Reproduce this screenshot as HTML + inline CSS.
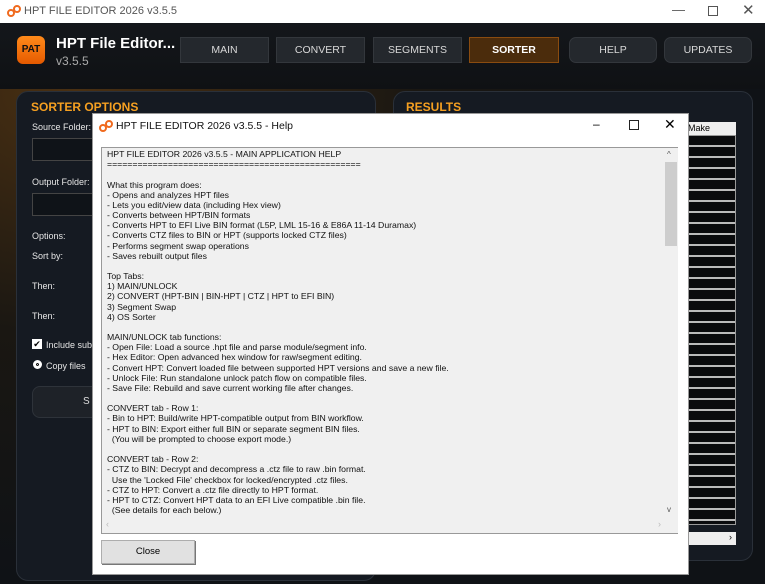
<!DOCTYPE html>
<html><head><meta charset="utf-8"><style>
*{margin:0;padding:0;box-sizing:border-box}
body{width:765px;height:584px;overflow:hidden;background:#0b0d10;font-family:"Liberation Sans",sans-serif;position:relative}
.abs{position:absolute}
.tb{left:0;top:0;width:765px;height:23px;background:#fff;color:#555;font-size:11px}
.hdr{left:0;top:23px;width:765px;height:66px;background:linear-gradient(#14171b,#0f1114)}
.tab{position:absolute;top:37px;height:26px;background:#24282d;border:1px solid #33373c;color:#d8d8d8;font-size:10.5px;text-align:center;line-height:24px}
.body{left:0;top:89px;width:765px;height:495px;background:radial-gradient(ellipse at 10% 0%,#4a3012 0%,#1a1712 35%,#0f1216 70%)}
.panel{background:#151a22;border:1px solid #2a3039;border-radius:12px}
.lbl{color:#e6e6e6;font-size:9px}
.dlg{left:92px;top:113px;width:597px;height:462px;background:#fff;border:1px solid #999}
pre{font-family:"Liberation Sans",sans-serif;font-size:8.7px;line-height:10.17px;color:#111}
</style></head><body>
<div class="abs tb"><svg class="abs" style="left:7px;top:5px" width="14" height="12"><circle cx="4" cy="8" r="3" fill="none" stroke="#f06a1e" stroke-width="2"/><circle cx="10" cy="4" r="3" fill="none" stroke="#f06a1e" stroke-width="2"/></svg><span class="abs" style="left:24px;top:5px">HPT FILE EDITOR 2026 v3.5.5</span>
<span class="abs" style="left:672px;top:2px;font-size:13px">—</span><span class="abs" style="left:708px;top:6px;width:10px;height:10px;border:1px solid #555"></span><span class="abs" style="left:742px;top:1px;font-size:15px">✕</span></div>
<div class="abs hdr"></div>
<div class="abs" style="left:17px;top:36px;width:28px;height:28px;border-radius:6px;background:linear-gradient(#ff8a1a,#e55a00);color:#111;font-weight:bold;font-size:10px;text-align:center;line-height:28px">PAT</div>
<div class="abs" style="left:56px;top:35px;color:#fff;font-weight:bold;font-size:15px">HPT File Editor...</div>
<div class="abs" style="left:56px;top:54px;color:#aaa;font-size:12px">v3.5.5</div>
<div class="tab" style="left:180px;width:89px">MAIN</div>
<div class="tab" style="left:276px;width:89px">CONVERT</div>
<div class="tab" style="left:373px;width:89px">SEGMENTS</div>
<div class="tab" style="left:469px;width:90px;background:#4b2c0c;border-color:#8a4c10;color:#fff;font-weight:bold">SORTER</div>
<div class="tab" style="left:569px;width:88px;border-radius:7px">HELP</div>
<div class="tab" style="left:664px;width:88px;border-radius:7px">UPDATES</div>
<div class="abs body"></div>
<div class="abs panel" style="left:16px;top:91px;width:360px;height:490px"></div>
<div class="abs" style="left:31px;top:100px;color:#f6a021;font-weight:bold;font-size:12px">SORTER OPTIONS</div>
<div class="abs lbl" style="left:32px;top:122px">Source Folder:</div>
<div class="abs" style="left:32px;top:138px;width:70px;height:23px;border:1px solid #444;background:#0f1318"></div>
<div class="abs lbl" style="left:32px;top:177px">Output Folder:</div>
<div class="abs" style="left:32px;top:193px;width:70px;height:23px;border:1px solid #444;background:#0f1318"></div>
<div class="abs lbl" style="left:32px;top:231px">Options:</div>
<div class="abs lbl" style="left:32px;top:251px">Sort by:</div>
<div class="abs lbl" style="left:32px;top:281px">Then:</div>
<div class="abs lbl" style="left:32px;top:311px">Then:</div>
<div class="abs" style="left:32px;top:339px;width:10px;height:10px;background:#fff;color:#000;font-size:9px;line-height:10px;text-align:center">✔</div>
<div class="abs lbl" style="left:46px;top:340px">Include sub</div>
<div class="abs" style="left:33px;top:360px;width:9px;height:9px;border-radius:50%;background:#fff;border:3px solid #fff;box-shadow:inset 0 0 0 1px #000"></div>
<div class="abs lbl" style="left:46px;top:361px">Copy files</div>
<div class="abs" style="left:32px;top:386px;width:70px;height:32px;border-radius:8px;background:#1e2228;border:1px solid #2e333a;color:#ddd;font-size:10px;line-height:30px;padding-left:50px">S</div>
<div class="abs panel" style="left:393px;top:91px;width:360px;height:470px"></div>
<div class="abs" style="left:406px;top:100px;color:#f6a021;font-weight:bold;font-size:12px">RESULTS</div>
<div class="abs" style="left:687px;top:122px;width:49px;height:13px;background:#eee;font-size:9px;line-height:13px;padding-left:1px">Make</div>
<div class="abs" style="left:687px;top:135px;width:49px;height:390px;background:repeating-linear-gradient(#0a0b0d 0 9px,#bbb 9px 11px);border:1px solid #999"></div>
<div class="abs" style="left:687px;top:532px;width:49px;height:13px;background:#eee;font-size:9px;text-align:right;padding-right:4px">›</div>
<div class="abs dlg">
<svg class="abs" style="left:6px;top:6px" width="14" height="12"><circle cx="4" cy="8" r="3" fill="none" stroke="#f06a1e" stroke-width="2"/><circle cx="10" cy="4" r="3" fill="none" stroke="#f06a1e" stroke-width="2"/></svg>
<div class="abs" style="left:23px;top:6px;font-size:10.5px;color:#111">HPT FILE EDITOR 2026 v3.5.5 - Help</div>
<div class="abs" style="left:500px;top:3px;font-size:12px">–</div>
<div class="abs" style="left:536px;top:6px;width:10px;height:10px;border:1px solid #222"></div>
<div class="abs" style="left:571px;top:2px;font-size:14px">✕</div>
<div class="abs" style="left:8px;top:33px;width:577px;height:387px;background:#f0f0f0;border:1px solid #999;border-right:none;overflow:hidden">
<pre style="position:absolute;left:5px;top:1px">HPT FILE EDITOR 2026 v3.5.5 - MAIN APPLICATION HELP
==================================================

What this program does:
- Opens and analyzes HPT files
- Lets you edit/view data (including Hex view)
- Converts between HPT/BIN formats
- Converts HPT to EFI Live BIN format (L5P, LML 15-16 &amp; E86A 11-14 Duramax)
- Converts CTZ files to BIN or HPT (supports locked CTZ files)
- Performs segment swap operations
- Saves rebuilt output files

Top Tabs:
1) MAIN/UNLOCK
2) CONVERT (HPT-BIN | BIN-HPT | CTZ | HPT to EFI BIN)
3) Segment Swap
4) OS Sorter

MAIN/UNLOCK tab functions:
- Open File: Load a source .hpt file and parse module/segment info.
- Hex Editor: Open advanced hex window for raw/segment editing.
- Convert HPT: Convert loaded file between supported HPT versions and save a new file.
- Unlock File: Run standalone unlock patch flow on compatible files.
- Save File: Rebuild and save current working file after changes.

CONVERT tab - Row 1:
- Bin to HPT: Build/write HPT-compatible output from BIN workflow.
- HPT to BIN: Export either full BIN or separate segment BIN files.
  (You will be prompted to choose export mode.)

CONVERT tab - Row 2:
- CTZ to BIN: Decrypt and decompress a .ctz file to raw .bin format.
  Use the 'Locked File' checkbox for locked/encrypted .ctz files.
- CTZ to HPT: Convert a .ctz file directly to HPT format.
- HPT to CTZ: Convert HPT data to an EFI Live compatible .bin file.
  (See details for each below.)</pre>
<div class="abs" style="right:0;top:0;width:14px;height:370px;background:#f0f0f0"><div class="abs" style="left:3px;top:2px;font-size:8px;color:#555">^</div><div class="abs" style="left:1px;top:14px;width:12px;height:84px;background:#cdcdcd"></div><div class="abs" style="left:3px;top:357px;font-size:8px;color:#555">v</div></div>
<div class="abs" style="left:0;bottom:0;width:563px;height:15px;background:#f0f0f0;font-size:9px;color:#bbb"><span class="abs" style="left:4px;top:1px">‹</span><span class="abs" style="right:4px;top:1px">›</span></div>
</div>
<div class="abs" style="left:8px;top:426px;width:94px;height:24px;background:#e1e1e1;border:1px solid #adadad;box-shadow:1px 1px 0 #777;font-size:9.5px;text-align:center;line-height:22px">Close</div>
</div>
</body></html>
